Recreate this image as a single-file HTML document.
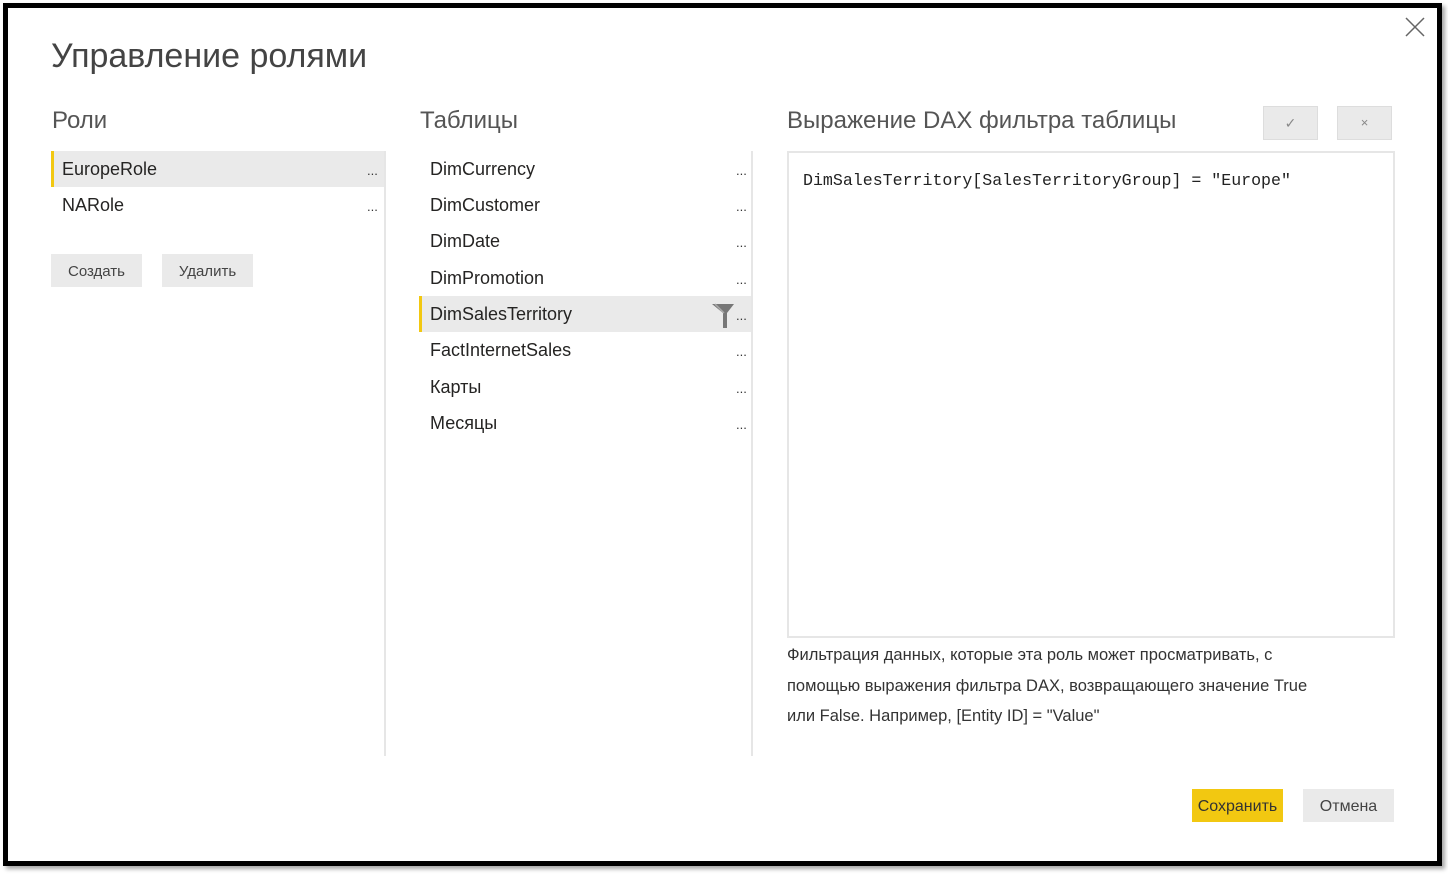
<!DOCTYPE html>
<html><head><meta charset="utf-8"><style>
*{margin:0;padding:0;box-sizing:border-box}
body{width:1448px;height:874px;background:#fff;position:relative;overflow:hidden;font-family:"Liberation Sans","DejaVu Sans",sans-serif;color:#252423}
.a{position:absolute;white-space:nowrap}
.frame{position:absolute;left:3px;top:3px;width:1439px;height:863px;border:5px solid #000;box-shadow:3px 3px 4px rgba(0,0,0,.35)}
.h{font-size:24px;color:#555;font-weight:300}
.item{position:absolute;height:36px;font-size:18px;line-height:36px;padding-left:11px;color:#252423}
.sel{background:#eaeaea;border-left:3px solid #f2c811;padding-left:8px}
.dots{position:absolute;font-size:13px;color:#333;}
.btn{position:absolute;background:#eaeaea;font-size:15px;color:#444;text-align:center}
</style></head><body>
<div class="frame"></div>
<div class="a" style="left:51px;top:37px;font-size:34px;color:#444;font-weight:300">Управление ролями</div>
<svg class="a" style="left:1405px;top:17px" width="20" height="20"><path d="M1 1L19 19M19 1L1 19" stroke="#666" stroke-width="1.5"/></svg>

<div class="a h" style="left:52px;top:107px">Роли</div>
<div class="a h" style="left:420px;top:107px">Таблицы</div>
<div class="a h" style="left:787px;top:107px">Выражение DAX фильтра таблицы</div>

<div class="item sel" style="left:51px;top:151px;width:333px">EuropeRole</div>
<div class="dots" style="left:367px;top:163px">...</div>
<div class="item" style="left:51px;top:187px;width:333px">NARole</div>
<div class="dots" style="left:367px;top:199px">...</div>
<div class="btn" style="left:51px;top:254px;width:91px;height:33px;line-height:35px">Создать</div>
<div class="btn" style="left:162px;top:254px;width:91px;height:33px;line-height:35px">Удалить</div>
<div class="a" style="left:384px;top:151px;width:2px;height:605px;background:#e6e6e6"></div>

<div class="item" style="left:419px;top:151px;width:333px">DimCurrency</div>
<div class="item" style="left:419px;top:187px;width:333px">DimCustomer</div>
<div class="item" style="left:419px;top:223px;width:333px">DimDate</div>
<div class="item" style="left:419px;top:260px;width:333px">DimPromotion</div>
<div class="item sel" style="left:419px;top:296px;width:333px">DimSalesTerritory</div>
<div class="item" style="left:419px;top:332px;width:333px">FactInternetSales</div>
<div class="item" style="left:419px;top:369px;width:333px">Карты</div>
<div class="item" style="left:419px;top:405px;width:333px">Месяцы</div>
<div class="dots" style="left:736px;top:163px">...</div>
<div class="dots" style="left:736px;top:199px">...</div>
<div class="dots" style="left:736px;top:235px">...</div>
<div class="dots" style="left:736px;top:272px">...</div>
<div class="dots" style="left:736px;top:308px">...</div>
<div class="dots" style="left:736px;top:344px">...</div>
<div class="dots" style="left:736px;top:381px">...</div>
<div class="dots" style="left:736px;top:417px">...</div>
<svg class="a" style="left:711px;top:303px" width="24" height="26"><path d="M1 1H23L16 10V25H12V10Z" fill="#777"/><path d="M4 1L13 10" stroke="#aaa" stroke-width="1.5"/></svg>
<div class="a" style="left:751px;top:151px;width:2px;height:605px;background:#e6e6e6"></div>

<div class="btn" style="left:1263px;top:106px;width:55px;height:34px;line-height:32px;border:1px solid #ddd;font-size:14px;color:#888">✓</div>
<div class="btn" style="left:1337px;top:106px;width:55px;height:34px;line-height:32px;border:1px solid #ddd;font-size:13px;color:#888">×</div>
<div class="a" style="left:787px;top:151px;width:608px;height:487px;border:2px solid #e6e6e6"></div>
<div class="a" style="left:803px;top:171px;font-family:'Liberation Mono',monospace;font-size:16.6px;color:#222">DimSalesTerritory[SalesTerritoryGroup] = "Europe"</div>
<div class="a" style="left:787px;top:640px;font-size:16.5px;line-height:30.5px;color:#333">Фильтрация данных, которые эта роль может просматривать, с<br>помощью выражения фильтра DAX, возвращающего значение True<br>или False. Например, [Entity ID] = "Value"</div>

<div class="btn" style="left:1192px;top:789px;width:91px;height:33px;line-height:35px;background:#f2c811;color:#333;font-size:16px">Сохранить</div>
<div class="btn" style="left:1303px;top:789px;width:91px;height:33px;line-height:35px;font-size:16px">Отмена</div>
</body></html>
